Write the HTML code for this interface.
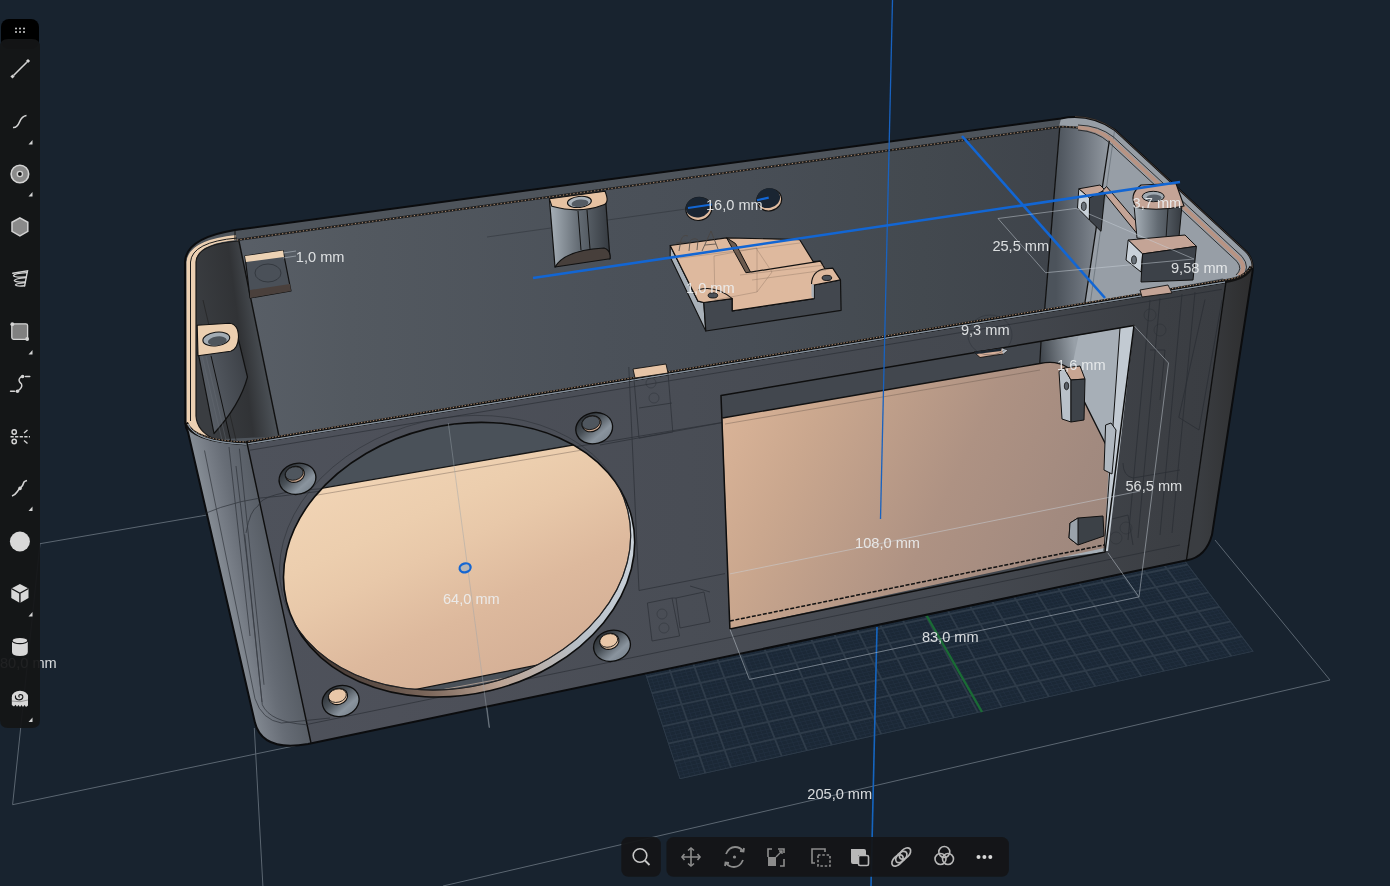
<!DOCTYPE html>
<html><head><meta charset="utf-8">
<style>
html,body{margin:0;padding:0;background:#18232f;overflow:hidden}
body{width:1390px;height:886px;position:relative;font-family:"Liberation Sans",sans-serif}
svg{position:absolute;left:0;top:0;will-change:transform}
</style></head><body>
<svg width="1390" height="886" viewBox="0 0 1390 886" font-family="'Liberation Sans', sans-serif">
<defs>
<linearGradient id="gBack" gradientUnits="userSpaceOnUse" x1="250" y1="0" x2="1050" y2="0">
<stop offset="0" stop-color="#585e66"/><stop offset="0.125" stop-color="#535960"/><stop offset="0.4375" stop-color="#4b5159"/><stop offset="0.625" stop-color="#484e56"/><stop offset="0.84" stop-color="#43494f"/><stop offset="1" stop-color="#3f444b"/>
</linearGradient>
<linearGradient id="gLeftWall" gradientUnits="userSpaceOnUse" x1="200" y1="350" x2="275" y2="340">
<stop offset="0" stop-color="#3a3d41"/><stop offset="0.55" stop-color="#313336"/><stop offset="1" stop-color="#585f66"/>
</linearGradient>
<linearGradient id="gRightWall" gradientUnits="userSpaceOnUse" x1="1056" y1="183" x2="1106" y2="183">
<stop offset="0" stop-color="#4c535b"/><stop offset="0.5" stop-color="#6a717a"/><stop offset="1" stop-color="#8e959d"/>
</linearGradient>
<linearGradient id="gFront" gradientUnits="userSpaceOnUse" x1="250" y1="0" x2="1220" y2="0">
<stop offset="0" stop-color="#4e525b"/><stop offset="0.15" stop-color="#4d5059"/><stop offset="0.45" stop-color="#494d55"/><stop offset="0.75" stop-color="#44484f"/><stop offset="0.94" stop-color="#3c3f44"/><stop offset="1" stop-color="#3a3d42"/>
</linearGradient>
<linearGradient id="gLeftSide" gradientUnits="userSpaceOnUse" x1="228" y1="606" x2="279" y2="595">
<stop offset="0" stop-color="#848b93"/><stop offset="0.25" stop-color="#767c85"/><stop offset="0.5" stop-color="#686e77"/><stop offset="0.6" stop-color="#646a73"/><stop offset="1" stop-color="#585e66"/>
</linearGradient>
<linearGradient id="gRightSide" gradientUnits="userSpaceOnUse" x1="1200" y1="400" x2="1250" y2="400">
<stop offset="0" stop-color="#3a3d41"/><stop offset="1" stop-color="#2e2e2f"/>
</linearGradient>
<linearGradient id="gFan" gradientUnits="userSpaceOnUse" x1="400" y1="430" x2="520" y2="690">
<stop offset="0" stop-color="#f2d5b6"/><stop offset="0.3" stop-color="#ecceae"/><stop offset="0.44" stop-color="#e8c8a9"/><stop offset="0.69" stop-color="#ddb99d"/><stop offset="1" stop-color="#d3ae95"/>
</linearGradient>
<linearGradient id="gDisp" gradientUnits="userSpaceOnUse" x1="722" y1="400" x2="1107" y2="585">
<stop offset="0" stop-color="#dab498"/><stop offset="0.09" stop-color="#d4af94"/><stop offset="0.22" stop-color="#caa78e"/><stop offset="0.57" stop-color="#ae9283"/><stop offset="0.83" stop-color="#a28a7f"/><stop offset="1" stop-color="#9c867c"/>
</linearGradient>
<linearGradient id="gBand" gradientUnits="userSpaceOnUse" x1="640" y1="540" x2="290" y2="610">
<stop offset="0" stop-color="#cdd5dd"/><stop offset="0.3" stop-color="#b8c0c8"/><stop offset="0.55" stop-color="#bca494"/><stop offset="0.75" stop-color="#7a665a"/><stop offset="1" stop-color="#3e3430"/>
</linearGradient>
<linearGradient id="gBoss" x1="0.15" y1="0" x2="0.75" y2="1">
<stop offset="0" stop-color="#24282c"/><stop offset="0.4" stop-color="#4a5158"/><stop offset="0.75" stop-color="#8a949e"/><stop offset="1" stop-color="#7a848e"/>
</linearGradient>
<linearGradient id="gCyl" x1="0" y1="0" x2="1" y2="0">
<stop offset="0" stop-color="#a8b1b9"/><stop offset="0.5" stop-color="#626a72"/><stop offset="1" stop-color="#353a40"/>
</linearGradient>
<linearGradient id="gCutWall" gradientUnits="userSpaceOnUse" x1="1041" y1="360" x2="1076" y2="356">
<stop offset="0" stop-color="#40464d"/><stop offset="1" stop-color="#98a0a8"/>
</linearGradient>
<linearGradient id="gLBr" gradientUnits="userSpaceOnUse" x1="200" y1="380" x2="248" y2="370">
<stop offset="0" stop-color="#5a6068"/><stop offset="1" stop-color="#3c4046"/>
</linearGradient>
<clipPath id="cOuterFan"><ellipse cx="459.1" cy="559.7" rx="177.7" ry="134.6" transform="rotate(-13.6 459.1 559.7)"/></clipPath>
<clipPath id="cGrid"><path d="M679.7,779.2L1253.8,651.6L1111.8,463.6L607.8,560.0Z"/></clipPath>
</defs>
<rect width="1390" height="886" fill="#18232f"/>

<g clip-path="url(#cGrid)">
<path d="M679.7,779.2L1253.8,651.6L1111.8,463.6L607.8,560.0Z" fill="#1b2836"/>
<path d="M679.7,779.2L607.8,560.0M684.9,778.0L612.3,559.1M690.0,776.9L616.8,558.3M695.2,775.8L621.3,557.4M700.4,774.6L625.8,556.6M705.5,773.5L630.2,555.7M710.7,772.3L634.7,554.9M715.8,771.2L639.2,554.0M720.9,770.0L643.6,553.1M726.0,768.9L648.1,552.3M731.1,767.8L652.5,551.4M736.2,766.6L657.0,550.6M741.3,765.5L661.4,549.7M746.4,764.4L665.8,548.9M751.5,763.2L670.3,548.1M756.6,762.1L674.7,547.2M761.7,761.0L679.1,546.4M766.7,759.9L683.5,545.5M771.8,758.7L687.9,544.7M776.8,757.6L692.3,543.8M781.9,756.5L696.7,543.0M786.9,755.4L701.1,542.2M792.0,754.3L705.5,541.3M797.0,753.1L709.9,540.5M802.0,752.0L714.3,539.6M807.0,750.9L718.6,538.8M812.0,749.8L723.0,538.0M817.0,748.7L727.4,537.1M822.0,747.6L731.7,536.3M827.0,746.5L736.1,535.5M831.9,745.4L740.4,534.6M836.9,744.3L744.7,533.8M841.9,743.2L749.1,533.0M846.8,742.1L753.4,532.1M851.8,741.0L757.7,531.3M856.7,739.9L762.1,530.5M861.7,738.8L766.4,529.7M866.6,737.7L770.7,528.8M871.5,736.6L775.0,528.0M876.4,735.5L779.3,527.2M881.3,734.4L783.6,526.4M886.2,733.3L787.9,525.6M891.1,732.2L792.2,524.7M896.0,731.1L796.4,523.9M900.9,730.0L800.7,523.1M905.8,729.0L805.0,522.3M910.6,727.9L809.3,521.5M915.5,726.8L813.5,520.7M920.4,725.7L817.8,519.8M925.2,724.6L822.0,519.0M930.1,723.6L826.3,518.2M934.9,722.5L830.5,517.4M939.7,721.4L834.7,516.6M944.6,720.3L839.0,515.8M949.4,719.3L843.2,515.0M954.2,718.2L847.4,514.2M959.0,717.1L851.6,513.4M963.8,716.1L855.8,512.6M968.6,715.0L860.1,511.8M973.4,713.9L864.3,510.9M978.1,712.9L868.5,510.1M982.9,711.8L872.6,509.3M987.7,710.7L876.8,508.5M992.4,709.7L881.0,507.7M997.2,708.6L885.2,506.9M1002.0,707.6L889.4,506.1M1006.7,706.5L893.5,505.3M1011.4,705.5L897.7,504.6M1016.2,704.4L901.9,503.8M1020.9,703.4L906.0,503.0M1025.6,702.3L910.2,502.2M1030.3,701.3L914.3,501.4M1035.0,700.2L918.5,500.6M1039.7,699.2L922.6,499.8M1044.4,698.1L926.7,499.0M1049.1,697.1L930.8,498.2M1053.8,696.1L935.0,497.4M1058.4,695.0L939.1,496.6M1063.1,694.0L943.2,495.8M1067.8,692.9L947.3,495.1M1072.4,691.9L951.4,494.3M1077.1,690.9L955.5,493.5M1081.7,689.8L959.6,492.7M1086.4,688.8L963.7,491.9M1091.0,687.8L967.8,491.1M1095.6,686.8L971.9,490.4M1100.2,685.7L975.9,489.6M1104.9,684.7L980.0,488.8M1109.5,683.7L984.1,488.0M1114.1,682.7L988.1,487.3M1118.7,681.6L992.2,486.5M1123.2,680.6L996.2,485.7M1127.8,679.6L1000.3,484.9M1132.4,678.6L1004.3,484.2M1137.0,677.6L1008.4,483.4M1141.5,676.5L1012.4,482.6M1146.1,675.5L1016.4,481.8M1150.7,674.5L1020.5,481.1M1155.2,673.5L1024.5,480.3M1159.7,672.5L1028.5,479.5M1164.3,671.5L1032.5,478.8M1168.8,670.5L1036.5,478.0M1173.3,669.5L1040.5,477.2M1177.9,668.5L1044.5,476.5M1182.4,667.5L1048.5,475.7M1186.9,666.5L1052.5,474.9M1191.4,665.5L1056.5,474.2M1195.9,664.5L1060.5,473.4M1200.4,663.5L1064.4,472.7M1204.9,662.5L1068.4,471.9M1209.3,661.5L1072.4,471.1M1213.8,660.5L1076.3,470.4M1218.3,659.5L1080.3,469.6M1222.7,658.5L1084.2,468.9M1227.2,657.5L1088.2,468.1M1231.6,656.5L1092.1,467.4M1236.1,655.5L1096.1,466.6M1240.5,654.6L1100.0,465.9M1245.0,653.6L1103.9,465.1M1249.4,652.6L1107.9,464.4M1253.8,651.6L1111.8,463.6M679.7,779.2L1253.8,651.6M678.5,775.6L1251.5,648.5M677.3,772.0L1249.2,645.4M676.1,768.4L1246.8,642.4M675.0,764.8L1244.5,639.4M673.8,761.2L1242.3,636.3M672.6,757.7L1240.0,633.3M671.5,754.1L1237.7,630.3M670.3,750.6L1235.5,627.3M669.2,747.1L1233.2,624.3M668.0,743.6L1231.0,621.4M666.9,740.2L1228.7,618.4M665.8,736.7L1226.5,615.5M664.6,733.3L1224.3,612.5M663.5,729.8L1222.1,609.6M662.4,726.4L1219.9,606.7M661.3,723.0L1217.7,603.8M660.2,719.7L1215.5,600.9M659.1,716.3L1213.4,598.1M658.0,713.0L1211.2,595.2M656.9,709.6L1209.1,592.4M655.8,706.3L1206.9,589.5M654.7,703.0L1204.8,586.7M653.6,699.7L1202.7,583.9M652.6,696.4L1200.6,581.1M651.5,693.2L1198.4,578.3M650.4,689.9L1196.3,575.5M649.4,686.7L1194.3,572.8M648.3,683.5L1192.2,570.0M647.3,680.3L1190.1,567.3M646.2,677.1L1188.0,564.5M645.2,673.9L1186.0,561.8M644.1,670.8L1183.9,559.1M643.1,667.6L1181.9,556.4M642.1,664.5L1179.9,553.7M641.1,661.4L1177.8,551.0M640.0,658.3L1175.8,548.4M639.0,655.2L1173.8,545.7M638.0,652.1L1171.8,543.1M637.0,649.0L1169.8,540.4M636.0,646.0L1167.9,537.8M635.0,642.9L1165.9,535.2M634.0,639.9L1163.9,532.6M633.0,636.9L1162.0,530.0M632.0,633.9L1160.0,527.4M631.1,630.9L1158.1,524.8M630.1,627.9L1156.1,522.3M629.1,624.9L1154.2,519.7M628.1,622.0L1152.3,517.2M627.2,619.0L1150.4,514.6M626.2,616.1L1148.4,512.1M625.3,613.2L1146.5,509.6M624.3,610.3L1144.7,507.1M623.3,607.4L1142.8,504.6M622.4,604.5L1140.9,502.1M621.5,601.7L1139.0,499.6M620.5,598.8L1137.2,497.2M619.6,596.0L1135.3,494.7M618.7,593.1L1133.5,492.3M617.7,590.3L1131.6,489.8M616.8,587.5L1129.8,487.4M615.9,584.7L1127.9,485.0M615.0,581.9L1126.1,482.6M614.1,579.1L1124.3,480.2M613.2,576.4L1122.5,477.8M612.3,573.6L1120.7,475.4M611.4,570.9L1118.9,473.0M610.5,568.1L1117.1,470.6M609.6,565.4L1115.3,468.3M608.7,562.7L1113.6,465.9M607.8,560.0L1111.8,463.6" stroke="#223040" stroke-width="0.8" fill="none"/>
<path d="M679.7,779.2L607.8,560.0M705.5,773.5L630.2,555.7M731.1,767.8L652.5,551.4M756.6,762.1L674.7,547.2M781.9,756.5L696.7,543.0M807.0,750.9L718.6,538.8M831.9,745.4L740.4,534.6M856.7,739.9L762.1,530.5M881.3,734.4L783.6,526.4M905.8,729.0L805.0,522.3M930.1,723.6L826.3,518.2M954.2,718.2L847.4,514.2M978.1,712.9L868.5,510.1M1002.0,707.6L889.4,506.1M1025.6,702.3L910.2,502.2M1049.1,697.1L930.8,498.2M1072.4,691.9L951.4,494.3M1095.6,686.8L971.9,490.4M1118.7,681.6L992.2,486.5M1141.5,676.5L1012.4,482.6M1164.3,671.5L1032.5,478.8M1186.9,666.5L1052.5,474.9M1209.3,661.5L1072.4,471.1M1231.6,656.5L1092.1,467.4M1253.8,651.6L1111.8,463.6M679.7,779.2L1253.8,651.6M673.8,761.2L1242.3,636.3M668.0,743.6L1231.0,621.4M662.4,726.4L1219.9,606.7M656.9,709.6L1209.1,592.4M651.5,693.2L1198.4,578.3M646.2,677.1L1188.0,564.5M641.1,661.4L1177.8,551.0M636.0,646.0L1167.9,537.8M631.1,630.9L1158.1,524.8M626.2,616.1L1148.4,512.1M621.5,601.7L1139.0,499.6M616.8,587.5L1129.8,487.4M612.3,573.6L1120.7,475.4M607.8,560.0L1111.8,463.6" stroke="#2e3b49" stroke-width="1.9" fill="none"/>
</g>
<g stroke="#5b6671" stroke-width="1" fill="none">
<path d="M40,543.7L207,515"/>
<path d="M40,543.7L12.6,804.7L302,744.3"/>
<path d="M443,886L1330,680L1215,540"/>
<path d="M254.3,728L262.9,886"/>
<path d="M486,700L489.5,727.7"/>
</g>
<path d="M877,627L871,886" stroke="#1565c0" stroke-width="1.6"/>
<path d="M926,614.5L982,712" stroke="#1a6b35" stroke-width="2.4"/>

<g id="box" stroke-linejoin="round">
<path d="M185.3,422 L185,262 Q186,238 235,230 L1061,118.4 Q1090,113 1114.6,129.8 L1245.5,251 Q1254,259 1252.5,272 L1212,534.8 Q1206,557 1187,560.3 L308,744 Q262,752 254.8,722 L188,432 Q185.5,428 185.3,422 Z" fill="#4e545b"/>
<!-- right rim top face (light) -->
<path d="M1061,118.4 Q1090,113 1114.6,129.8 L1245.5,251 Q1254,259 1252.5,272 L1226,282 L1105,140 Q1090,127 1059,127 Z" fill="#979ea6"/>
<!-- opening: left wall -->
<path d="M193,262 Q196,243 239,241 L279,436.5 L213,439.5 Q195,437 193,420 Z" fill="url(#gLeftWall)"/>
<!-- back face -->
<path d="M239,241 L1059.8,126.8 L1044.5,311 L279,436.5 Z" fill="url(#gBack)"/>
<!-- right wall -->
<path d="M1059.8,126.8 Q1090,126 1109.6,137.4 L1237,257 Q1244,268 1236,276 L1044.5,311.5 Z" fill="#979ea6"/>
<path d="M1059.8,126.8 Q1090,126 1109.6,137.4 L1084.6,305 L1044.5,311.5 Z" fill="url(#gRightWall)"/>
<path d="M1059.8,126.8 L1044.5,311.5 M1109.6,139 L1084.6,305" stroke="#111" stroke-width="1.3" fill="none"/>
<path d="M1114.6,130 L1090,305" stroke="#6a727a" stroke-width="0.8" fill="none"/>
<path d="M239,241 L279,436.5" stroke="#111" stroke-width="1.4" fill="none"/>
<path d="M203,300 L236,440" stroke="#222" stroke-width="1" fill="none" opacity="0.7"/>
<!-- left peach strip -->
<path d="M186.5,421 L186.5,262 Q188,240 236,235 L236,240 Q196,244 196,262 L196,416 Q197,431 214,439 L206,441 Q188,436 186.5,421 Z" fill="#ecd0b2"/>
<path d="M190.5,421 L190.5,262 Q192,242 237,238" stroke="#1a1a1a" stroke-width="1" fill="none"/>
<path d="M214,439 Q197,431 196,416 L196,262 Q197,244 239,241" stroke="#1a1a1a" stroke-width="1.2" fill="none"/>
<!-- rim inner edge dashed -->
<path d="M237,240 L1059.8,126.8 Q1090,126 1109.6,137.4" stroke="#1c1c1c" stroke-width="2.2" fill="none"/>
<path d="M237,240 L1059.8,126.8 Q1090,126 1109.6,137.4" stroke="#c8a080" stroke-width="0.9" stroke-dasharray="1.2 2.3" fill="none"/>
<path d="M1078,127.5 Q1098,128.5 1111,139.5 L1239.5,259 Q1247,268 1239,276" stroke="#b89484" stroke-width="4" fill="none"/>
<path d="M1078,125 Q1099,125.5 1113.5,137 L1242,256.5 Q1251,267 1242,278 M1078,130 Q1097,131.5 1108.5,142 L1237,261.5 Q1243,269 1236,275" stroke="#242424" stroke-width="0.9" fill="none"/>
<!-- front face -->
<path d="M246.6,441 L1226,281.5 L1186.5,560 L311,743 Z" fill="url(#gFront)"/>
<!-- left side face -->
<path d="M186,423 Q190,439 246.6,441 L311,743 L308,744 Q262,752 254.8,722 L188,432 Z" fill="url(#gLeftSide)"/>
<!-- right side face -->
<path d="M1226,282 Q1247,279 1251.5,266 L1252.5,272 L1212,534.8 Q1206,557 1187,560.3 Z" fill="url(#gRightSide)"/>
<!-- front top edge -->
<path d="M186,422.5 Q192,441 245,443.2 L1224.5,281.2 Q1246,278.5 1251.5,266.5" stroke="#121212" stroke-width="4" fill="none"/>
<path d="M186,421.5 Q192,440 245,441.9 L1224.5,279.9 Q1246,277.5 1251.5,265.5" stroke="#c09878" stroke-width="0.9" stroke-dasharray="1.4 1.6" fill="none"/>
<path d="M188,424 Q194,442 246,444.1 L1225,282.1" stroke="#8d9aa6" stroke-width="0.9" fill="none"/>
<path d="M188,424 Q194,442 246,444.1 L1225,282.1" stroke="#8d9aa6" stroke-width="0.9" fill="none"/>
<path d="M246.6,441 L311,743 M1226,281.5 L1186.5,560" stroke="#0e0e0e" stroke-width="1.4" fill="none"/>
<!-- outer silhouette stroke -->
<path d="M185.3,422 L185,262 Q186,238 235,230 L1061,118.4 Q1090,113 1114.6,129.8 L1245.5,251 Q1254,259 1252.5,272 L1212,534.8 Q1206,557 1187,560.3 L308,744 Q262,752 254.8,722 L188,432 Q185.5,428 185.3,422 Z" fill="none" stroke="#0b0c0e" stroke-width="2"/>
<path d="M235,230 L235,240" stroke="#111" stroke-width="1"/>
<path d="M1075,116.5 Q1098,117 1114.6,129.8 L1245.5,251 Q1253,258 1252.5,268" stroke="#4d423c" stroke-width="0.8" fill="none"/>

<g fill="none" stroke="#262a30" stroke-width="0.8" opacity="0.75">
<path d="M250,450.2 L1222,289.3"/>
<path d="M258,506 Q262,492 322,488.7 L1100,360"/>
<path d="M246,533 Q250,510 258,506"/>
<path d="M247,560 L262.3,704.8 Q270,722 305.8,724.7 L1180,545"/>
<path d="M236,466 L247,560"/>
<path d="M628.8,367 L639,590.5 L725,573.6"/>
<path d="M633.9,378 L668,373 L672.8,432 L639,438.2 Z M639,408 L672,403"/>
<path d="M647.4,603 L672,598 L679.6,636 L652,641 Z M676,598 L704,592 L710,622 L680,628 Z M672,598 L676,598 M690,586 L710,592"/>
<path d="M600,445 L730,421.2"/>
<path d="M1123,463 Q1123,476 1133,478 L1180,470"/>
<path d="M1150,300 L1128,540 M1160,298 L1138,538 M1182,294 L1160,535 M1195,292 L1172,533"/>
<path d="M1178.8,417.4 L1205,299.5 M1178.8,417.4 L1199,430 L1222,300"/>
<path d="M1108,520 L1128,515 L1133,545 M1150,350 L1165,350 L1160,400"/>
<path d="M204.5,450.5 L255,698.7 Q262,720 281.4,723 L330,718 M229,447 L250,636 M239.4,448.7 L264,684.8 M201,515 Q240,498 281.4,496 L330,490 M244.7,534.4 L262,702"/>
</g>
<g fill="none" stroke="#2a2e34" stroke-width="0.7" opacity="0.6">
<circle cx="1116" cy="538" r="6"/><circle cx="1126" cy="528" r="6"/>
<circle cx="1150" cy="315" r="6"/><circle cx="1160" cy="330" r="6"/>
<circle cx="651" cy="383" r="5"/><circle cx="654" cy="398" r="5"/>
<circle cx="662" cy="614" r="5"/><circle cx="664" cy="628" r="5"/>
</g>

<clipPath id="cInner"><ellipse cx="455.1" cy="552.7" rx="177.7" ry="134.6" transform="rotate(-13.6 455.1 552.7)"/></clipPath>
<ellipse cx="459.1" cy="559.7" rx="177.7" ry="134.6" transform="rotate(-13.6 459.1 559.7)" fill="url(#gBand)"/>
<g clip-path="url(#cOuterFan)">
<g clip-path="url(#cInner)">
<rect x="270" y="400" width="380" height="310" fill="#4a5159"/>
<path d="M250,500.6 L700,423.2 L700,632.5 L250,722.5 Z" fill="url(#gFan)"/>
<path d="M250,500.6 L700,423.2" stroke="#151515" stroke-width="1.3" fill="none"/>
<path d="M413.7,689.8 L700,632.5" stroke="#151515" stroke-width="1.2" fill="none"/>
<path d="M300,498 L700,430" stroke="#6a5a50" stroke-width="0.7" fill="none" opacity="0.6"/>
<path d="M430,692 L560,668" stroke="#e8c8b0" stroke-width="1" fill="none" opacity="0.6"/>
</g>
<ellipse cx="455.1" cy="552.7" rx="177.7" ry="134.6" transform="rotate(-13.6 455.1 552.7)" fill="none" stroke="#151515" stroke-width="1.2"/>
</g>
<ellipse cx="459.1" cy="559.7" rx="177.7" ry="134.6" transform="rotate(-13.6 459.1 559.7)" fill="none" stroke="#0d0d0d" stroke-width="1.6"/>
<ellipse cx="455.1" cy="552.7" rx="177.7" ry="134.6" transform="rotate(-13.6 455.1 552.7)" fill="none" stroke="#2a2e34" stroke-width="0.8" opacity="0.6"/>
<path d="M448.3,423 L489.1,727.7" stroke="#9aa2aa" stroke-width="0.8" opacity="0.55" fill="none"/>
<ellipse cx="465.1" cy="567.8" rx="5.6" ry="4.4" fill="#b8b6b4" stroke="#1466d2" stroke-width="2.3" transform="rotate(-15 465.1 567.8)"/>

<g>
<ellipse cx="297.5" cy="478.8" rx="18.6" ry="15.4" fill="url(#gBoss)" stroke="#0e0e0e" stroke-width="1.3" transform="rotate(-15 297.5 478.8)"/>
<ellipse cx="296.1" cy="473.8" rx="9.7" ry="7.9" fill="#c9a68e" stroke="#111" stroke-width="1.1" transform="rotate(-15 297.5 478.8)"/>
<ellipse cx="295.7" cy="472.8" rx="9.1" ry="6.6" fill="#4f565e" stroke="#111" stroke-width="0.8" transform="rotate(-15 297.5 478.8)"/>
</g><g>
<ellipse cx="594.2" cy="428.2" rx="18.6" ry="15.4" fill="url(#gBoss)" stroke="#0e0e0e" stroke-width="1.3" transform="rotate(-15 594.2 428.2)"/>
<ellipse cx="592.8000000000001" cy="423.2" rx="9.7" ry="7.9" fill="#c9a68e" stroke="#111" stroke-width="1.1" transform="rotate(-15 594.2 428.2)"/>
<ellipse cx="592.4000000000001" cy="422.2" rx="9.1" ry="6.6" fill="#4f565e" stroke="#111" stroke-width="0.8" transform="rotate(-15 594.2 428.2)"/>
</g><g>
<ellipse cx="340.7" cy="701" rx="18.6" ry="15.4" fill="url(#gBoss)" stroke="#0e0e0e" stroke-width="1.3" transform="rotate(-15 340.7 701)"/>
<ellipse cx="339.3" cy="696" rx="9.7" ry="7.9" fill="#e9c7a8" stroke="#111" stroke-width="1.1" transform="rotate(-15 340.7 701)"/>
<ellipse cx="338.9" cy="695" rx="9.1" ry="6.6" fill="#e9c7a8" stroke="#111" stroke-width="0.8" transform="rotate(-15 340.7 701)"/>
</g><g>
<ellipse cx="612" cy="645.8" rx="18.6" ry="15.4" fill="url(#gBoss)" stroke="#0e0e0e" stroke-width="1.3" transform="rotate(-15 612 645.8)"/>
<ellipse cx="610.6" cy="640.8" rx="9.7" ry="7.9" fill="#e9c7a8" stroke="#111" stroke-width="1.1" transform="rotate(-15 612 645.8)"/>
<ellipse cx="610.2" cy="639.8" rx="9.1" ry="6.6" fill="#e9c7a8" stroke="#111" stroke-width="0.8" transform="rotate(-15 612 645.8)"/>
</g>
<path d="M721,395.5 L1134,325.5 L1105,552 L729.9,629 Z" fill="#42474e"/>
<path d="M1041,342 L1134,325.5 L1105,552 L1041,560 Z" fill="#a7afb7"/>
<path d="M1041,342 L1078.5,336 L1061,420 L1040,420 Z" fill="url(#gCutWall)"/>
<path d="M1120,328 L1134,325.5 L1108,551 L1104,551 Z" fill="#c2cad2"/>
<path d="M722.4,418 L1039.8,363.5 Q1056,360 1067,367 L1109.5,452 L1104.3,548 L729.9,629 Z" fill="url(#gDisp)"/>
<path d="M722.4,418 L1039.8,363.5 Q1056,360 1067,367 L1109.5,452" stroke="#111" stroke-width="1.4" fill="none"/>
<path d="M725,424 L1040,370" stroke="#5a4a42" stroke-width="0.7" opacity="0.5" fill="none"/>
<path d="M729.9,621 L1104,545" stroke="#111" stroke-width="1.5" stroke-dasharray="4 1.6" fill="none"/>
<path d="M1041,342 L1039.8,363.5" stroke="#111" stroke-width="1.2" fill="none"/>
<path d="M721,395.5 L1134,325.5 L1105,552 L729.9,629 Z" fill="none" stroke="#0e0e0e" stroke-width="1.5"/>
<path d="M1120,328 L1104,551" stroke="#111" stroke-width="1" fill="none"/>
<!-- bracket 1,6 -->
<path d="M1059,371.5 L1064,368 L1071,380 L1071,422 L1062,419 Z" fill="#b9c1c9" stroke="#111" stroke-width="1"/>
<path d="M1064,368 L1080,366 L1085,379 L1071,380 Z" fill="#c8a592" stroke="#111" stroke-width="1"/>
<path d="M1071,380 L1085,379 L1084,420 L1071,422 Z" fill="#3e4349" stroke="#111" stroke-width="1"/>
<ellipse cx="1066.5" cy="386" rx="2.2" ry="3.8" fill="#5a6068" stroke="#111" stroke-width="0.8"/>
<!-- tab -->
<path d="M1105.6,425 L1111,423 L1116,430 L1112,474 L1104,470 Z" fill="#b0b8c0" stroke="#111" stroke-width="1"/>
<!-- lower block -->
<path d="M1070,523 L1078,518 L1103,516 L1104,536 L1078,545 L1069,538 Z" fill="#3c4147" stroke="#111" stroke-width="1"/>
<path d="M1070,523 L1078,518 L1078,545 L1069,538 Z" fill="#9aa2aa" stroke="#111" stroke-width="1"/>

<!-- hidden line on back face -->
<path d="M487,237 L686,209" stroke="#2a2f35" stroke-width="0.8" opacity="0.6" fill="none"/>
<!-- standoff -->
<path d="M549.4,198.8 L555,267 Q580,250 610,258.8 L605,191.3 Z" fill="url(#gCyl)" stroke="#111" stroke-width="1.2"/>
<path d="M555,267 Q565,250 604,248 Q611,250 610,258.8 Z" fill="#473f3b" stroke="#111" stroke-width="1.1"/>
<path d="M578,211 L581,250 M587,210 L590,249" stroke="#111" stroke-width="1" fill="none"/>
<path d="M549.4,198.8 L605,191.3 Q610,203 603,205 Q580,214 551.9,206.3 Z" fill="#e6c2a2" stroke="#111" stroke-width="1.1"/>
<ellipse cx="579.4" cy="201.9" rx="12" ry="5.5" fill="#aab3bb" stroke="#111" stroke-width="1.1" transform="rotate(-6 579.4 201.9)"/>
<ellipse cx="580" cy="203.3" rx="8.5" ry="3.8" fill="#555c64" transform="rotate(-6 580 203.3)"/>
<!-- holes 16,0 -->
<ellipse cx="698.8" cy="208.9" rx="13" ry="11.5" fill="#e0bca0" stroke="#111" stroke-width="1.2" transform="rotate(-12 698.8 208.9)"/>
<ellipse cx="698" cy="207.2" rx="12.2" ry="10.2" fill="#1a2532" transform="rotate(-12 698 207.2)"/>
<ellipse cx="769.2" cy="199.9" rx="12.5" ry="11" fill="#e0bca0" stroke="#111" stroke-width="1.2" transform="rotate(-12 769.2 199.9)"/>
<ellipse cx="768.4" cy="198.2" rx="11.8" ry="9.8" fill="#1a2532" transform="rotate(-12 768.4 198.2)"/>

<!-- bracket -->
<path d="M670.2,245.5 L698,301.2 L703.8,302.5 L705.8,331 L670.2,257 Z" fill="#a9b1b9" stroke="#111" stroke-width="1.1"/>
<path d="M703.8,302.5 L732.3,298.6 L732.3,310.9 L813.9,298.6 L813.9,285 L840.5,279.9 L841.1,310.3 L705.8,331 Z" fill="#42474e" stroke="#111" stroke-width="1.2"/>
<path d="M670.2,245.5 L726.5,237.8 L799.7,239.7 L813.3,261.7 L820.4,261.1 L824.9,268.8 L832.7,268.2 L840.5,279.9 L813.9,285 L813.9,298.6 L732.3,310.9 L732.3,298.6 L703.8,302.5 L698,301.2 Z" fill="#deb99e" stroke="#111" stroke-width="1.2"/>
<path d="M811.5,296.5 L811.5,283.5 L813.9,285 L813.9,298.6 Z" fill="#a9b1b9"/>
<path d="M698.7,289.6 Q716,285 732.3,298.6 M811.5,284 Q812,271 824.9,268.8" fill="none" stroke="#111" stroke-width="1.1"/>
<path d="M726.5,237.8 L735.6,243.6 L750.5,272.1 L745.9,272.7 Z" fill="#6b5a4e" stroke="#111" stroke-width="1"/>
<path d="M750.5,272.1 L820.4,261.1" stroke="#111" stroke-width="1.2" fill="none"/>
<ellipse cx="712.9" cy="295.4" rx="4.8" ry="2.6" fill="#4a5058" stroke="#111" stroke-width="0.9"/>
<ellipse cx="826.9" cy="277.9" rx="4.8" ry="2.6" fill="#4a5058" stroke="#111" stroke-width="0.9"/>
<g stroke="#7a6456" stroke-width="0.6" opacity="0.55" fill="none">
<path d="M680,258 L800,243 M714,256 L715,300 L757,292 L772,272 L756,248 M714,256 L757,248 L757,292 M740,275 L825,265 M752,280 L826,270"/>
</g>
<g stroke="#4a4440" stroke-width="0.9" fill="none" opacity="0.85">
<path d="M679,251 L681,240 Q683,234 688,236 M676,243 L686,242 M689,251 L690,241 Q694,237 698,240 L697,250 M702,251 L711,231 L718,249 M705,245 L716,244"/>
</g>
<!-- left wall bracket -->
<path d="M198,352 L237.6,336 L247.5,377 Q240,405 214,433.5 Z" fill="url(#gLBr)" stroke="#111" stroke-width="1.2"/>
<path d="M211,355.7 L230.7,441" stroke="#111" stroke-width="1" fill="none"/>
<path d="M202,356 L222,440 M206,356 L226,440" stroke="#6a7078" stroke-width="0.6" fill="none" opacity="0.6"/>
<path d="M197.2,325.2 L229.2,323.2 Q238.5,324 238.5,337 Q238,349 230.7,351.2 L198,355.7 Z" fill="#eccfb0" stroke="#111" stroke-width="1.1"/>
<ellipse cx="216.3" cy="339" rx="13.5" ry="6.8" fill="#a3acb4" stroke="#111" stroke-width="1.1" transform="rotate(-8 216.3 339)"/>
<ellipse cx="217.3" cy="341" rx="9.5" ry="4.5" fill="#4e555c" transform="rotate(-8 217.3 341)"/>
<!-- left rim small block 1,0 -->
<path d="M245,256 L283,250.6 L291,291 L250,298 Z" fill="#4a5058" stroke="#111" stroke-width="1.2"/>
<path d="M245,256 L283,250.6 L284,257 L246,262 Z" fill="#ecd2b4"/>
<path d="M250,290 L290,284 L291,291 L250,298 Z" fill="#4a403c"/>
<ellipse cx="268" cy="273" rx="13" ry="9" fill="none" stroke="#2a2e33" stroke-width="0.7"/>
<!-- right wall bracket A -->
<path d="M1078.8,188.8 L1100,185 L1105,190 L1089.5,198 Z" fill="#c4a496" stroke="#111" stroke-width="1"/>
<path d="M1078.8,188.8 L1089.5,198 L1089.4,220 L1077.5,208 Z" fill="#c9d1d9" stroke="#111" stroke-width="1"/>
<path d="M1089.5,198 L1105,190 L1101,231.3 L1089.4,220 Z" fill="#3c4148" stroke="#111" stroke-width="1"/>
<ellipse cx="1083.8" cy="206.3" rx="2.4" ry="4.2" fill="#6a727a" stroke="#111" stroke-width="0.8"/>
<!-- connecting strip -->
<path d="M1102.5,191 L1106.5,186.5 L1150,237.6 L1142.6,240.5 Z" fill="#c4a496" stroke="#111" stroke-width="1"/>
<!-- boss B -->
<path d="M1134,205 L1182,205 L1179,237 Q1160,242 1137,238 Z" fill="url(#gCyl)" stroke="#111" stroke-width="1"/>
<path d="M1168,208 L1166,239" stroke="#111" stroke-width="0.9"/>
<path d="M1141,185 L1176,183.5 L1184,206 Q1160,211.5 1136,207.5 Q1128,195 1141,185 Z" fill="#c4a496" stroke="#111" stroke-width="1.1"/>
<ellipse cx="1153.2" cy="196.5" rx="11" ry="5.2" fill="#a0a9b1" stroke="#111" stroke-width="1"/>
<ellipse cx="1154" cy="197.8" rx="7.5" ry="3.4" fill="#59616a"/>
<!-- bracket C -->
<path d="M1128.2,240 L1185,235 L1196.4,246.3 L1142.6,253.9 Z" fill="#c4a496" stroke="#111" stroke-width="1"/>
<path d="M1128.2,240 L1142.6,253.9 L1141,272 L1126,260 Z" fill="#c9d1d9" stroke="#111" stroke-width="1"/>
<path d="M1142.6,253.9 L1196.4,246.3 L1193,280 L1141,282 Z" fill="#3c4148" stroke="#111" stroke-width="1"/>
<ellipse cx="1134" cy="260" rx="2.4" ry="4.2" fill="#6a727a" stroke="#111" stroke-width="0.8"/>
<!-- small peach tabs on front top -->
<path d="M633,369 L666,364 L668,373 L635,378 Z" fill="#e6c4a6" stroke="#111" stroke-width="0.9"/>
<path d="M1140,290 L1168,285 L1172,293 L1142,297 Z" fill="#c4a496" stroke="#111" stroke-width="0.9"/>
<!-- 9,3 hole -->
<path d="M974,352 L1001.8,348.2 L1007.5,350.3 L1003,354 L980,357.5 Z" fill="#d4ae98" stroke="#111" stroke-width="0.9"/>
<path d="M974,352 L1001.8,348.2 L1001,351 L976.5,354 Z" fill="#1c2630"/>
<path d="M1001.8,348.2 L1007.5,350.3 L1003,354 Z" fill="#b8c0c8"/>
<ellipse cx="990" cy="335" rx="22" ry="20" fill="none" stroke="#2a2e34" stroke-width="0.7" opacity="0.6"/>

</g>
<g fill="none">
<path d="M892.5,0 L880.5,519" stroke="#1862c0" stroke-width="1.3"/>
<path d="M533,278 L1180,182" stroke="#1266d4" stroke-width="2.6"/>
<path d="M962,136 L1105,298" stroke="#1266d4" stroke-width="2.6"/>
<path d="M688,208 L711.7,204.5 M757,200.2 L768.7,197.6" stroke="#1266d4" stroke-width="2.2"/>
</g>
<g fill="none" stroke="#c8d0d8" stroke-width="0.9" opacity="0.55">
<path d="M1134,325.5 L1168.5,363 L1139,596.9 L749.4,679.4 L729.9,629"/>
<path d="M1107.9,552.9 L1139,596.9"/>
<path d="M998,218.5 L1076,208.4 L1194,259 L1045.6,272.7 Z"/>
<path d="M730,573.9 L1140,491.1"/>
<path d="M283,253 L296,251 M283,258 L296,256"/>
</g>

<g font-size="14.6" fill="#eceef0" fill-opacity="0.9">
<text x="295.8" y="261.7">1,0 mm</text>
<text x="706" y="209.8">16,0 mm</text>
<text x="686" y="292.8">1,0 mm</text>
<text x="992.4" y="251">25,5 mm</text>
<text x="1132.6" y="207.5">3,7 mm</text>
<text x="1171" y="273">9,58 mm</text>
<text x="960.9" y="334.7">9,3 mm</text>
<text x="1057" y="370.4">1,6 mm</text>
<text x="1125.5" y="490.5">56,5 mm</text>
<text x="855.1" y="547.7">108,0 mm</text>
<text x="443" y="603.7">64,0 mm</text>
<text x="921.9" y="641.6">83,0 mm</text>
<text x="807.3" y="799">205,0 mm</text>
<text x="0" y="667.7">80,0 mm</text>
</g>
<g>
<rect x="1" y="19" width="38" height="30" rx="8" fill="#000"/>
<g fill="#cfcfcf"><circle cx="16" cy="28.5" r="1"/><circle cx="20" cy="28.5" r="1"/><circle cx="24" cy="28.5" r="1"/>
<circle cx="16" cy="32" r="1"/><circle cx="20" cy="32" r="1"/><circle cx="24" cy="32" r="1"/></g>
<path d="M0,47 Q0,39 8,39 L32,39 Q40,39 40,47 L40,720 Q40,728 32,728 L8,728 Q0,728 0,720 Z" fill="#141516" fill-opacity="0.94"/>
<!-- line -->
<path d="M13.5,75.5 L26.8,62.2" stroke="#d4d4d4" stroke-width="1.6"/>
<rect x="11" y="75" width="3" height="3" fill="#d4d4d4" transform="rotate(45 12.5 76.5)"/>
<rect x="26.5" y="59.5" width="3" height="3" fill="#d4d4d4" transform="rotate(45 28 61)"/>
<!-- curve -->
<path d="M13,127.5 Q17,128 19.5,122 Q22,116 26.5,115.5" stroke="#d4d4d4" stroke-width="1.6" fill="none"/>
<path d="M28.5,144.5 L32.5,144.5 L32.5,140 Z" fill="#d4d4d4"/>
<!-- circle -->
<circle cx="19.9" cy="174" r="8.8" fill="#8a8a8a" stroke="#d4d4d4" stroke-width="1.6"/>
<circle cx="19.9" cy="174" r="2.6" fill="#141516" stroke="#d4d4d4" stroke-width="1.4"/>
<path d="M28.5,196.5 L32.5,196.5 L32.5,192 Z" fill="#d4d4d4"/>
<!-- hexagon -->
<path d="M19.9,217.8 L27.8,222.3 L27.8,231.3 L19.9,235.8 L12,231.3 L12,222.3 Z" fill="#8a8a8a" stroke="#d4d4d4" stroke-width="1.5"/>
<!-- spring -->
<g stroke="#d4d4d4" stroke-width="1.4" fill="none" stroke-linecap="round">
<path d="M12.8,273.3 L27.5,270.8 L24.6,285.8"/>
<path d="M27,272.6 Q14,273.5 13.5,275.6 Q14,277.6 26.2,277"/>
<path d="M26.2,277.6 Q14.5,278.5 14.3,280.6 Q15,282.6 25.4,282"/>
<path d="M25.4,282.6 Q15.5,283.5 15.5,285 Q16.5,286.6 24.6,285.8"/>
</g>
<!-- square -->
<rect x="11.8" y="323.8" width="15.8" height="15.6" rx="1.8" fill="#808080" stroke="#d4d4d4" stroke-width="1.3"/>
<circle cx="12.3" cy="324.2" r="1.9" fill="#d4d4d4"/><circle cx="27.2" cy="339" r="1.9" fill="#d4d4d4"/>
<path d="M28.5,354.5 L32.5,354.5 L32.5,350 Z" fill="#d4d4d4"/>
<!-- s-curve -->
<g stroke="#d4d4d4" stroke-width="1.4" fill="none" stroke-linecap="round">
<path d="M17.4,391.2 Q23,387.5 21.5,384 Q18,381 19.5,378.5 Q20.5,376.8 22.6,376.5"/>
<path d="M10.5,391.2 L14.5,391.2 M25.5,376.5 L29.8,376.5"/>
</g>
<circle cx="17.4" cy="391.2" r="1.8" fill="#d4d4d4"/><circle cx="22.6" cy="376.5" r="1.8" fill="#d4d4d4"/>
<!-- mirror -->
<g stroke="#d4d4d4" stroke-width="1.4" fill="none">
<circle cx="14.2" cy="432" r="2.2"/><circle cx="14.2" cy="441.5" r="2.2"/>
<path d="M10.5,436.8 L30,436.8" stroke-dasharray="3.2 1.4"/>
<path d="M24,433 L27.5,430 M24,440.5 L27.5,443.5"/>
</g>
<!-- spline -->
<g stroke="#d4d4d4" stroke-width="1.6" fill="none">
<path d="M12,496 Q15,495 17,492 Q19,489 20,488.5 Q23,486 24,482 Q25,481 27,480.5"/>
</g>
<circle cx="20" cy="488.4" r="1.8" fill="#d4d4d4"/>
<path d="M28.5,511 L32.5,511 L32.5,506.5 Z" fill="#d4d4d4"/>
<!-- filled circle -->
<circle cx="19.9" cy="541.5" r="10" fill="#d8d8d8"/>
<!-- cube -->
<path d="M19.9,584 L28.5,588.5 L28.5,598 L19.9,603 L11.3,598 L11.3,588.5 Z" fill="#d8d8d8"/>
<path d="M11.3,588.5 L19.9,593.3 L28.5,588.5 M19.9,593.3 L19.9,603" stroke="#141516" stroke-width="1.4" fill="none"/>
<path d="M28.5,616.5 L32.5,616.5 L32.5,612 Z" fill="#d4d4d4"/>
<!-- cylinder -->
<path d="M12,641 L12,652 Q12,656 19.9,656 Q27.8,656 27.8,652 L27.8,641 Z" fill="#d8d8d8"/>
<ellipse cx="19.9" cy="640.5" rx="7.9" ry="3.2" fill="#d8d8d8" stroke="#141516" stroke-width="1.2"/>
<!-- tape -->
<path d="M11.8,697 L11.8,705 L14,706.5 L15.5,704.8 L17,706.8 L18.5,705 L20,707 L21.5,705 L23,707 L24.5,705 L26,707 L28,705.5 L28,697 Z" fill="#d8d8d8"/>
<ellipse cx="20" cy="697" rx="8.1" ry="6.2" fill="#d8d8d8"/>
<path d="M19.5,697.5 Q17.8,695.5 20,694.5 Q23.2,694.5 22.8,697.5 Q22,700.3 18,699.8 Q14.8,698.8 15.5,695.5" stroke="#141516" stroke-width="1.1" fill="none"/>
<path d="M11.8,701 Q20,703 28,700" stroke="#141516" stroke-width="0.7" fill="none" opacity="0.5"/>
<path d="M28.5,722 L32.5,722 L32.5,717.5 Z" fill="#d4d4d4"/>
</g>

<g>
<rect x="621.3" y="837.1" width="39.6" height="39.6" rx="7" fill="#141517" fill-opacity="0.95"/>
<rect x="666.4" y="837.1" width="342.5" height="39.6" rx="7" fill="#141517" fill-opacity="0.95"/>
<circle cx="640" cy="855.5" r="6.8" stroke="#c8c8c8" stroke-width="1.6" fill="none"/>
<path d="M645,860.5 L649.5,865" stroke="#c8c8c8" stroke-width="1.8"/>
<!-- move -->
<g stroke="#8c8c8c" stroke-width="1.6" fill="none">
<path d="M682,857 L700,857 M691,848 L691,866"/>
<path d="M684.5,854 L682,857 L684.5,860 M697.5,854 L700,857 L697.5,860 M688,850.5 L691,848 L694,850.5 M688,863.5 L691,866 L694,863.5"/>
</g>
<!-- rotate -->
<g stroke="#8c8c8c" stroke-width="1.8" fill="none">
<path d="M726,854 Q729,847 735,847 Q740,847 743,851"/>
<path d="M743,860 Q740,867 734,867 Q729,867 726,863"/>
<path d="M740,851 L743.5,851.5 L744,848 M729,863 L725.5,862.5 L725,866"/>
</g>
<circle cx="734.5" cy="857" r="1.6" fill="#8c8c8c"/>
<!-- scale -->
<g>
<path d="M768,857 L776,857 L776,866 L768,866 Z" fill="#8c8c8c"/>
<path d="M768,853 L768,849 L772,849 M778,849 L784,849 L784,853 M784,859 L784,866 L780,866 M768,857 L768,853" stroke="#8c8c8c" stroke-width="1.6" fill="none"/>
<path d="M776,857 L782,851 M779,851 L782,851 L782,854" stroke="#8c8c8c" stroke-width="1.4" fill="none"/>
</g>
<!-- copy -->
<g stroke="#8c8c8c" stroke-width="1.6" fill="none">
<path d="M815,863 L812,863 L812,849 L825,849 L825,852"/>
<rect x="818" y="855" width="12" height="11" stroke-dasharray="2.5 1.8"/>
</g>
<!-- boolean -->
<path d="M851,849 L864,849 Q866,849 866,851 L866,855 L858,855 L858,864 L853,864 Q851,864 851,862 Z" fill="#b8b8b8"/>
<rect x="858.5" y="855.5" width="10" height="10" rx="1.5" fill="none" stroke="#b8b8b8" stroke-width="1.6"/>
<!-- links -->
<g stroke="#b8b8b8" stroke-width="1.7" fill="none">
<ellipse cx="897.5" cy="860.5" rx="4.2" ry="6.8" transform="rotate(45 897.5 860.5)"/>
<ellipse cx="901.3" cy="857" rx="4.2" ry="6.8" transform="rotate(45 901.3 857)"/>
<ellipse cx="905" cy="853.5" rx="4.2" ry="6.8" transform="rotate(45 905 853.5)"/>
</g>
<!-- venn -->
<g stroke="#b8b8b8" stroke-width="1.6" fill="none">
<circle cx="944.3" cy="852" r="5.5"/><circle cx="940.5" cy="859" r="5.5"/><circle cx="948" cy="859" r="5.5"/>
</g>
<g fill="#d8d8d8"><circle cx="978.5" cy="857" r="2"/><circle cx="984.4" cy="857" r="2"/><circle cx="990.3" cy="857" r="2"/></g>
</g>
</svg>
</body></html>
